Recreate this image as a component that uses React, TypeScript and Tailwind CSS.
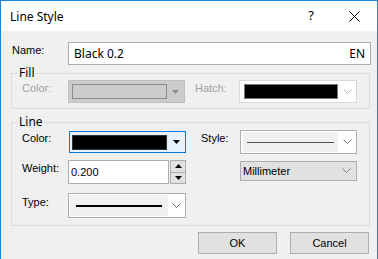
import React from 'react'

const ui = { fontFamily: '"Liberation Sans", Arial, sans-serif' }
const segoe = { fontFamily: '"Noto Sans", "Open Sans", sans-serif' }

function Chevron({ color = '#606060' }: { color?: string }) {
  return (
    <svg width="9" height="6" viewBox="0 0 9 6">
      <path d="M0.5 0.5 L4.5 4.5 L8.5 0.5" fill="none" stroke={color} strokeWidth="1" />
    </svg>
  )
}

function Tri({ up = false, color = '#000' }: { up?: boolean; color?: string }) {
  return (
    <svg width="7" height="4" viewBox="0 0 7 4">
      <path d={up ? 'M0 4 L3.5 0 L7 4 Z' : 'M0 0 L7 0 L3.5 4 Z'} fill={color} />
    </svg>
  )
}

export default function App() {
  return (
    <div className="w-[378px] h-[259px] bg-[#f0f0f0] border-x border-t border-[#1883d7] flex flex-col text-[11px] text-black" style={ui}>
      {/* title bar */}
      <div className="h-[30px] bg-white flex items-center shrink-0">
        <span className="ml-[9px] text-[12px] pt-[1px]" style={segoe}>Line Style</span>
        <span className="ml-auto text-[13px] mr-[35px]" style={segoe}>?</span>
        <svg width="11" height="11" viewBox="0 0 11 11" className="mr-[17px]">
          <path d="M0.5 0.5 L10.5 10.5 M10.5 0.5 L0.5 10.5" stroke="#000" strokeWidth="1" />
        </svg>
      </div>

      <div className="flex flex-col pl-[10px] pr-[6px]">
        {/* Name */}
        <div className="flex items-center mt-[11px] h-[23px]">
          <span className="w-[57px] pl-[1px] -mt-[6px]">Name:</span>
          <div className="flex-1 h-[23px] bg-white border border-[#adadad] flex items-center px-[5px] text-[12px]" style={segoe}>
            <span>Black 0.2</span>
            <span className="ml-auto">EN</span>
          </div>
        </div>

        {/* Fill */}
        <fieldset className="mt-[1px] border border-[#dcdcdc] pl-[6px] pr-0 pb-[5px] mr-[1px]">
          <legend className="px-[1px] leading-[14px] text-[12px]" style={segoe}>Fill</legend>
          <div className="flex items-center h-[23px] -ml-[6px] pl-[10px]">
            <span className="w-[46px] text-[#a0a0a0] -mt-[7px]">Color:</span>
            <div className="w-[117px] h-[23px] bg-[#cccccc] border border-[#bfbfbf] flex items-center">
              <div className="ml-[3px] w-[95px] h-[15px] border border-[#8c8c8c] bg-[#cccccc]" />
              <div className="flex-1 flex justify-center">
                <Tri color="#8a8a8a" />
              </div>
            </div>
            <span className="ml-auto w-[44px] text-[#a0a0a0] -mt-[7px]">Hatch:</span>
            <div className="w-[118px] h-[23px] bg-white border border-[#d9d9d9] flex items-center mr-[12px]">
              <div className="ml-[4px] w-[94px] h-[15px] bg-black border border-[#7a7a7a]" />
              <div className="flex-1 flex justify-center">
                <Chevron color="#b0b0b0" />
              </div>
            </div>
          </div>
        </fieldset>

        {/* Line */}
        <fieldset className="mt-[6px] border border-[#dcdcdc] pl-[6px] pb-[7px] mr-[1px]">
          <legend className="px-[1px] leading-[14px] text-[12px]" style={segoe}>Line</legend>
          <div className="flex -ml-[6px] pl-[10px] mt-[1px]">
            <div className="flex flex-col w-[164px]">
              <div className="flex items-center h-[24px]">
                <span className="w-[47px] -mt-[7px]">Color:</span>
                <div className="w-[117px] h-[22px] bg-[#e5f1fb] border border-[#0078d7] flex items-center">
                  <div className="ml-[2px] w-[95px] h-[15px] bg-black border border-[#333]" />
                  <div className="flex-1 flex justify-center">
                    <Tri />
                  </div>
                </div>
              </div>
              <div className="flex items-center h-[24px] mt-[6px]">
                <span className="w-[46px] -mt-[7px]">Weight:</span>
                <div className="w-[101px] h-[24px] bg-white border border-[#adadad] flex items-center pl-[2px]">0.200</div>
                <div className="ml-[1px] w-[16px] h-[24px] flex flex-col border border-[#adadad]">
                  <div className="flex-1 bg-[#e1e1e1] flex items-center justify-center border-b border-[#adadad]">
                    <Tri up />
                  </div>
                  <div className="flex-1 bg-[#e1e1e1] flex items-center justify-center">
                    <Tri />
                  </div>
                </div>
              </div>
              <div className="flex items-center h-[25px] mt-[9px]">
                <span className="w-[46px] -mt-[7px]">Type:</span>
                <div className="w-[118px] h-[25px] bg-white border border-[#adadad] flex items-center">
                  <div className="ml-[1px] w-[98px] h-[21px] bg-[#f0f0f0] flex items-center px-[6px]">
                    <div className="w-full h-[2px] bg-black" />
                  </div>
                  <div className="flex-1 flex justify-center">
                    <Chevron />
                  </div>
                </div>
              </div>
            </div>

            <div className="flex flex-col ml-[15px]">
              <div className="flex items-center h-[24px]">
                <span className="w-[39px] -mt-[7px]">Style:</span>
                <div className="w-[117px] h-[24px] bg-white border border-[#adadad] flex items-center">
                  <div className="ml-[2px] w-[95px] h-[20px] bg-[#f0f0f0] flex items-center px-[4px]">
                    <div className="w-full h-[1px] bg-[#555]" />
                  </div>
                  <div className="flex-1 flex justify-center">
                    <Chevron color="#808080" />
                  </div>
                </div>
              </div>
              <div className="ml-[39px] mt-[7px] w-[117px] h-[20px] bg-[#e1e1e1] border border-[#adadad] flex items-center pl-[2px]">
                <span>Millimeter</span>
                <span className="ml-auto mr-[5px] flex">
                  <Chevron color="#808080" />
                </span>
              </div>
            </div>
          </div>
        </fieldset>

        {/* buttons */}
        <div className="flex justify-end gap-[13px] mt-[6px] pr-[2px]">
          <button className="w-[79px] h-[22px] bg-[#e1e1e1] border border-[#adadad] text-[11px]" style={ui}>OK</button>
          <button className="w-[79px] h-[22px] bg-[#e1e1e1] border border-[#adadad] text-[11px]" style={ui}>Cancel</button>
        </div>
      </div>
    </div>
  )
}
